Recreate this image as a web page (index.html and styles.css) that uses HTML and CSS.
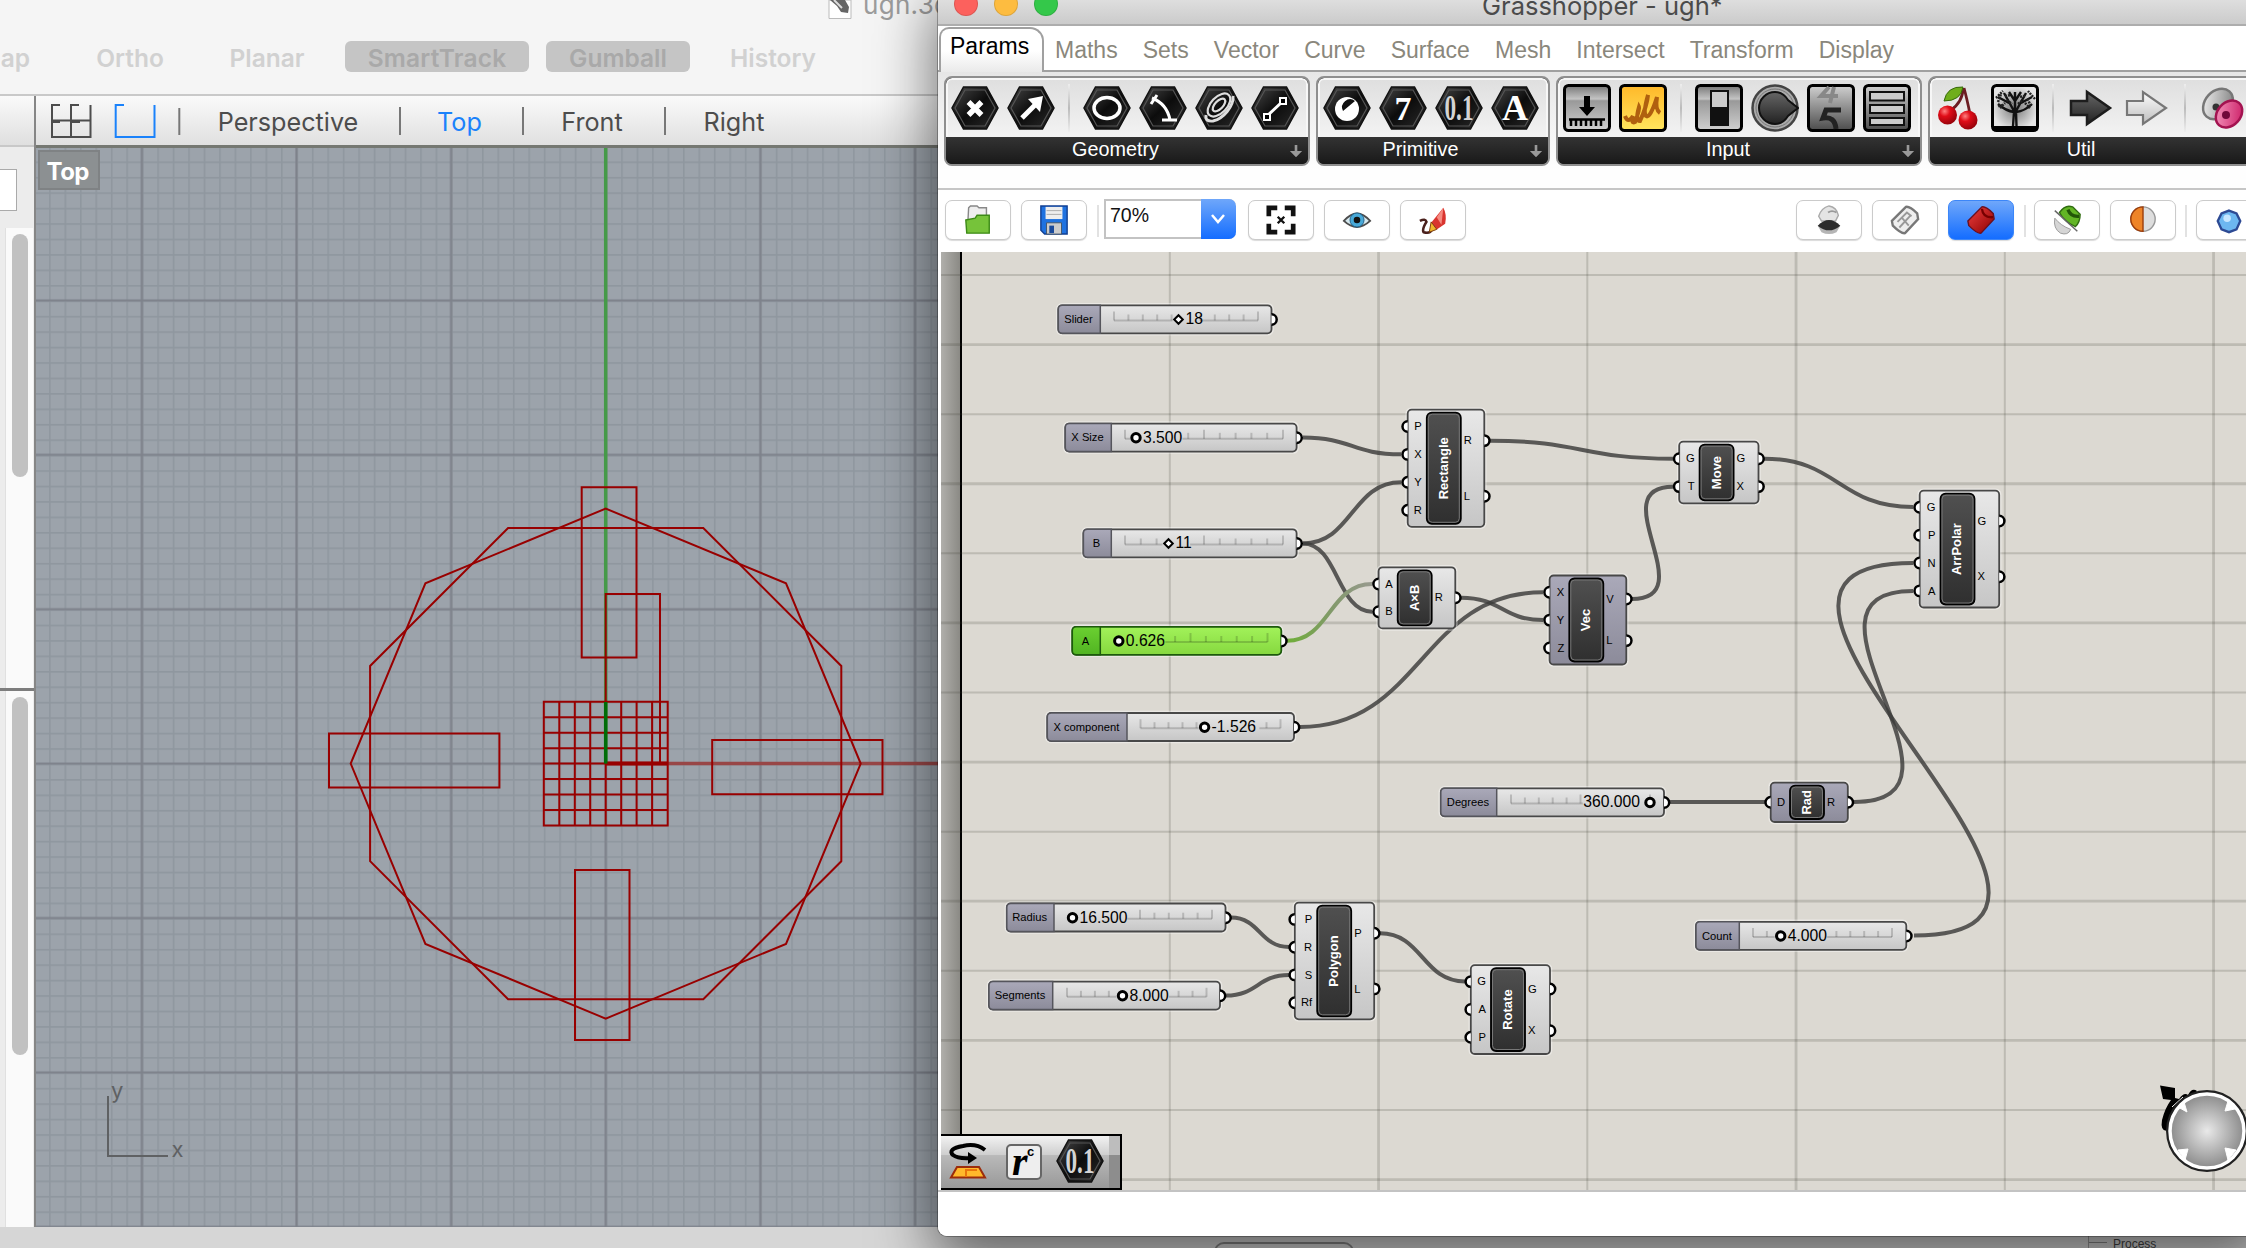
FILE: index.html
```html
<!DOCTYPE html>
<html lang="en">
<head>
<meta charset="utf-8">
<title>Grasshopper - ugh*</title>
<link rel="stylesheet" href="styles.css">
</head>
<body>
<svg class="defs" width="0" height="0">
  <defs>
    <linearGradient id="hexg" x1="0" y1="0" x2="1" y2="1"><stop offset="0" stop-color="#4a4a4a"/><stop offset=".5" stop-color="#0c0c0c"/><stop offset="1" stop-color="#2b2b2b"/></linearGradient>
    <linearGradient id="metal" x1="0" y1="0" x2="0" y2="1"><stop offset="0" stop-color="#777"/><stop offset=".3" stop-color="#c4c4c4"/><stop offset=".34" stop-color="#999"/><stop offset="1" stop-color="#d0d0d0"/></linearGradient>
    <linearGradient id="metal2" x1="0" y1="0" x2="0" y2="1"><stop offset="0" stop-color="#d0d0d0"/><stop offset="1" stop-color="#4c4c4c"/></linearGradient>
    <linearGradient id="gold" x1="0" y1="0" x2="0" y2="1"><stop offset="0" stop-color="#ffb829"/><stop offset="1" stop-color="#ffe65e"/></linearGradient>
    <radialGradient id="cherry" cx=".35" cy=".3" r=".8"><stop offset="0" stop-color="#ff8080"/><stop offset=".35" stop-color="#e00d18"/><stop offset="1" stop-color="#8a0008"/></radialGradient>
    <radialGradient id="treeg"><stop offset="0" stop-color="#777"/><stop offset="1" stop-color="#e4e4e4"/></radialGradient>
    <linearGradient id="dark" x1="0" y1="0" x2="0" y2="1"><stop offset="0" stop-color="#666"/><stop offset="1" stop-color="#222"/></linearGradient>
    <linearGradient id="light" x1="0" y1="0" x2="0" y2="1"><stop offset="0" stop-color="#fdfdfd"/><stop offset="1" stop-color="#bdbdbd"/></linearGradient>
    <linearGradient id="grayg" x1="0" y1="0" x2="1" y2="1"><stop offset="0" stop-color="#fafafa"/><stop offset="1" stop-color="#777"/></linearGradient>
    <linearGradient id="pinkg" x1="0" y1="0" x2="1" y2="1"><stop offset="0" stop-color="#f7a0c4"/><stop offset="1" stop-color="#c9145f"/></linearGradient>
    <linearGradient id="redg" x1="0" y1="0" x2="1" y2="1"><stop offset="0" stop-color="#f04040"/><stop offset="1" stop-color="#8a0000"/></linearGradient>
    <symbol id="hex" viewBox="0 0 48 48"><path d="M12.500 3H35.500L47 24 35.500 45H12.500L1 24Z" fill="url(#hexg)" stroke="#111" stroke-width="1.500"/><path d="M14 6H34L44 24 34 42H14L4 24Z" fill="none" stroke="#555" stroke-width="1.200"/></symbol>
  </defs>
</svg>

<div class="rhino">
  <header class="topbar">
    <div class="doc">
      <svg width="24" height="20" viewBox="0 0 24 20"><path d="M1 0H23V18.500H1Z" fill="#fff" stroke="#bbb"/><path d="M2 0L9 6 13 12 20 13 21 7 17 0Z" fill="#666"/><path d="M6 0l8 8" stroke="#ddd" stroke-width="2"/></svg>
      <span>ugh.3dm</span>
    </div>
    <nav class="modes">
      <span class="m m1">ap</span><span class="m m2">Ortho</span><span class="m m3">Planar</span><span class="m m4 on">SmartTrack</span><span class="m m5 on">Gumball</span><span class="m m6">History</span>
    </nav>
  </header>
  <div class="work">
    <aside class="side">
      <div class="side-head"></div>
      <div class="side-a"><div class="field"></div><div class="track t1"><i></i></div></div>
      <div class="side-b"><div class="track t2"><i></i></div></div>
    </aside>
    <main class="view">
      <nav class="viewtabs">
        <svg width="130" height="40" viewBox="51 102 130 40" fill="none" stroke-width="2">
          <path d="M60 106H52V138H90.500V106M79 106H71V138M52 121.500H90.500M52 123H60M71 123H80" stroke="#4d4d4d"/>
          <path d="M124 106H115.700V138H154.500V106" stroke="#1a82fb"/><path d="M179.300 109V136" stroke="#777"/>
        </svg>
        <span class="vt v1">Perspective</span><i></i><span class="vt v2 sel">Top</span><i></i><span class="vt v3">Front</span><i></i><span class="vt v4">Right</span>
      </nav>
      <svg class="viewport" viewBox="36 148 902 1079" width="902" height="1079">
        <defs>
          <pattern id="minor" x="605.700" y="763.600" width="15.462" height="15.440" patternUnits="userSpaceOnUse"><path d="M0 0H15.500M0 0V15.500" stroke="#8f979f" stroke-width="3.200"/></pattern>
          <pattern id="major" x="528.400" y="686.400" width="154.620" height="154.400" patternUnits="userSpaceOnUse"><path d="M0 77.200H154.700M77.300 0V154.500" stroke="#7e828b" stroke-width="2.200"/></pattern>
        </defs>
        <rect x="36" y="148" width="902" height="1079" fill="#9ca3ab"/>
        <rect x="36" y="148" width="902" height="1079" fill="url(#minor)"/>
        <rect x="36" y="148" width="902" height="1079" fill="url(#major)"/>
        <path d="M605.700 148V764" stroke="#459a48" stroke-width="3.500"/>
        <path d="M605.700 763.600H938" stroke="#984646" stroke-width="3.500"/>
        <g fill="none" stroke="#980000" stroke-width="2">
          <path d="M860.700 763.600L786 943.900 605.700 1018.600 425.400 943.900 350.700 763.600 425.400 583.300 605.700 508.600 786 583.300Z"/>
          <path d="M841.300 861.200L703.300 999.200H508.100L370.100 861.200V666L508.100 528H703.300L841.300 666Z"/>
          <path d="M581.700 487.300H636.500V657.500H581.700ZM605.700 594H660V763.600H605.700ZM329 733.400H499.400V787.400H329ZM712.200 740H882.500V794.300H712.200ZM575 870H629.500V1040H575Z"/>
          <path d="M543.800 701.800H667.700V825.600H543.800ZM559.300 701.800V825.600M574.800 701.800V825.600M590.200 701.800V825.600M605.700 701.800V825.600M621.200 701.800V825.600M636.600 701.800V825.600M652.100 701.800V825.600M543.800 717.200H667.700M543.800 732.700H667.700M543.800 748.200H667.700M543.800 763.600H667.700M543.800 779H667.700M543.800 794.500H667.700M543.800 810H667.700"/>
          <path d="M605.700 763.600H667.700" stroke-width="4"/><path d="M605.700 763.600V702" stroke="#006d08" stroke-width="3.500"/>
        </g>
        <path d="M108 1096V1156H168" fill="none" stroke="#5f6163" stroke-width="2"/>
        <text class="ax" x="111" y="1098">y</text><text class="ax" x="171.500" y="1157">x</text>
        <g><rect x="39" y="151" width="60" height="38" fill="#8c9092" stroke="#7f8284" stroke-width="2"/><text class="vlabel" x="46.500" y="180" textLength="43">Top</text></g>
      </svg>
    </main>
  </div>
  <footer class="dock"><div class="pill"></div><div class="proc"><i></i><span>Process</span></div></footer>
</div>

<section class="gh">
  <header class="title"><i class="r"></i><i class="y"></i><i class="g"></i><h1>Grasshopper - ugh*</h1></header>
  <nav class="tabs"><b>Params</b><span>Maths</span><span>Sets</span><span>Vector</span><span>Curve</span><span>Surface</span><span>Mesh</span><span>Intersect</span><span>Transform</span><span>Display</span></nav>
  <div class="ribbon">
    <div class="grp g1"><div class="icons">
      <svg viewBox="0 0 48 48"><use href="#hex"/><path d="M17.500 18L30.500 31M30.500 18L17.500 31" stroke="#fff" stroke-width="5.500"/></svg>
      <svg viewBox="0 0 48 48"><use href="#hex"/><path d="M15 34L28 21" stroke="#fff" stroke-width="5"/><path d="M21 15L36 12 33 28Z" fill="#fff"/></svg>
      <i></i>
      <svg viewBox="0 0 48 48"><use href="#hex"/><ellipse cx="24" cy="24" rx="13" ry="10.500" fill="none" stroke="#fff" stroke-width="3.500"/></svg>
      <svg viewBox="0 0 48 48"><use href="#hex"/><path d="M13 14Q28 20 31 36M23 36H38M12 20L18 11" fill="none" stroke="#fff" stroke-width="3"/></svg>
      <svg viewBox="0 0 48 48"><use href="#hex"/><g fill="none" stroke="#ddd" stroke-width="2.200"><ellipse cx="24" cy="21" rx="14" ry="8" transform="rotate(-46 24 21)"/><ellipse cx="24" cy="21" rx="8" ry="4" transform="rotate(-46 24 21)"/><path d="M11 31Q10 38 18 37C28 35 39 22 38 12" stroke-width="3"/></g></svg>
      <svg viewBox="0 0 48 48"><use href="#hex"/><path d="M16 32L32 17" stroke="#fff" stroke-width="3"/><path d="M13 30H19V36H13ZM29 14H35V20H29Z" fill="#000" stroke="#fff" stroke-width="2"/></svg>
    </div><div class="cap"><span>Geometry</span><svg viewBox="0 0 16 16"><path d="M6.500 1H9.500V8H15L8 15 1 8H6.500Z" fill="#999"/></svg></div></div>
    <div class="grp g2"><div class="icons">
      <svg viewBox="0 0 48 48"><use href="#hex"/><circle cx="24" cy="25" r="12" fill="#fff"/><path d="M20 27A8 8 0 0 1 32 17Z" fill="#111"/></svg>
      <svg viewBox="0 0 48 48"><use href="#hex"/><text class="hx" x="24" y="36">7</text></svg>
      <svg viewBox="0 0 48 48"><use href="#hex"/><text class="hx sm" x="24" y="36" textLength="29" lengthAdjust="spacingAndGlyphs">0.1</text></svg>
      <svg viewBox="0 0 48 48"><use href="#hex"/><text class="hx big" x="24" y="36">A</text></svg>
    </div><div class="cap"><span>Primitive</span><svg viewBox="0 0 16 16"><path d="M6.500 1H9.500V8H15L8 15 1 8H6.500Z" fill="#999"/></svg></div></div>
    <div class="grp g3"><div class="icons">
      <svg viewBox="0 0 48 48"><rect x="1.500" y="1.500" width="45" height="45" rx="4" fill="url(#metal)" stroke="#000" stroke-width="3"/><path d="M21 12H27V23H32L24 32 16 23H21Z"/><path d="M6 35.500H42M8 35V42M13 35V42M18 35V42M23 35V42M28 35V42M33 35V42M38 35V42" stroke="#000" stroke-width="2.500"/></svg>
      <svg viewBox="0 0 48 48"><rect x="1.500" y="1.500" width="45" height="45" rx="4" fill="url(#gold)" stroke="#000" stroke-width="3"/><path d="M6 32Q9 40 14 32Q12 40 16 38Q21 25 20 23Q16 37 21 37Q28 22 29 11Q24 28 27 32Q31 35 38 13Q36 26 41 29" fill="none" stroke="#b0600f" stroke-width="4"/></svg>
      <i></i>
      <svg viewBox="0 0 48 48"><rect x="1.500" y="1.500" width="45" height="45" rx="4" fill="url(#metal)" stroke="#000" stroke-width="3"/><rect x="15" y="6" width="19" height="36" fill="#111"/><rect x="17" y="8" width="15" height="15" fill="#ccc"/></svg>
      <svg viewBox="0 0 48 48"><circle cx="24" cy="24" r="22.500" fill="#aaa" stroke="#444" stroke-width="2.500"/><circle cx="24" cy="24" r="19" fill="none" stroke="#777"/><path d="M24 8A16 16 0 1 0 24 40Q32 40 37 32L47 24 37 16Q32 8 24 8Z" fill="url(#dark)" stroke="#111" stroke-width="2"/></svg>
      <svg viewBox="0 0 48 48"><rect x="1.500" y="1.500" width="45" height="45" rx="4" fill="url(#metal2)" stroke="#000" stroke-width="3"/><path d="M22 3L14 12H31M27 3L23 19" fill="none" stroke="#888" stroke-width="4"/><path d="M34 26H19L16 34Q28 32 29 45" fill="none" stroke="#222" stroke-width="5"/></svg>
      <svg viewBox="0 0 48 48"><rect x="1.500" y="1.500" width="45" height="45" rx="4" fill="url(#metal2)" stroke="#000" stroke-width="3"/><path d="M7 8H41V16.500H7ZM7 21H41V29H7ZM7 34H41V41H7Z" fill="#ccc" stroke="#111" stroke-width="2"/></svg>
    </div><div class="cap"><span>Input</span><svg viewBox="0 0 16 16"><path d="M6.500 1H9.500V8H15L8 15 1 8H6.500Z" fill="#999"/></svg></div></div>
    <div class="grp g4"><div class="icons">
      <svg viewBox="0 0 48 48"><path d="M28 4Q28 18 15 27M29 4Q32 15 35 30" fill="none" stroke="#6b1c22" stroke-width="2.800"/><path d="M9 17Q12 2 28 3Q26 17 9 17Z" fill="#6fae1b" stroke="#37690b"/><circle cx="12.500" cy="31" r="9.500" fill="url(#cherry)"/><circle cx="33" cy="36" r="9.500" fill="url(#cherry)"/></svg>
      <svg viewBox="0 0 48 48"><rect x="1.500" y="1.500" width="45" height="45" rx="4" fill="url(#treeg)" stroke="#000" stroke-width="3"/><path d="M1 42H47V45Q47 47 44 47H4Q1 47 1 45Z"/><path d="M22 42L23 28Q15 27 7 20M25.500 42L25 28Q34 27 41 20M24 30V8M23 27L13 9M25 27L35 9M18 19L7 13M30 19L41 13M24 17L18 8M24 17L30 8" fill="none" stroke="#111" stroke-width="2.400"/><path d="M7 18L10 10M12 21L7 22M40 22L36 14M14 12L20 11M34 12L28 13M5 14L12 7M44 15L37 7M16 16L21 20M27 20L32 16M9 24L14 19M34 19L39 24" fill="none" stroke="#222" stroke-width="2.500" stroke-dasharray="2 1"/></svg>
      <i></i>
      <svg viewBox="0 0 48 48"><path d="M4 17H20V8L43 24 20 40V31H4Z" fill="url(#dark)" stroke="#1d1d1d" stroke-width="2.500"/></svg>
      <svg viewBox="0 0 48 48"><path d="M4 17H20V8L43 24 20 40V31H4Z" fill="url(#light)" stroke="#777" stroke-width="2.200"/></svg>
      <i></i>
      <svg viewBox="0 0 48 48"><ellipse cx="19" cy="20" rx="17" ry="13" transform="rotate(-48 19 20)" fill="url(#grayg)" stroke="#777" stroke-width="2.500"/><circle cx="17" cy="23" r="3.500" fill="#333"/><ellipse cx="30" cy="30" rx="15" ry="11.500" transform="rotate(-48 30 30)" fill="url(#pinkg)" stroke="#a31350" stroke-width="2.500"/><circle cx="27" cy="31" r="4" fill="#70083a"/></svg>
    </div><div class="cap"><span>Util</span><svg viewBox="0 0 16 16"><path d="M6.500 1H9.500V8H15L8 15 1 8H6.500Z" fill="#999"/></svg></div></div>
  </div>
  <div class="tools">
    <button class="bt"><svg viewBox="0 0 32 32"><path d="M6 3L8 1H15L17 3H25V22H5Z" fill="#eee" stroke="#888" stroke-width="1.500"/><path d="M3 16L13 14 15 11H28V30H4Z" fill="#76c33a" stroke="#3d8a17" stroke-width="1.500"/></svg></button>
    <button class="bt"><svg viewBox="0 0 32 32"><path d="M2 1H30V31H6L2 27Z" fill="#1f72e0" stroke="#123f91" stroke-width="1.500"/><path d="M7 2H25V15H7Z" fill="#eee"/><path d="M8 6H24M8 10H24" stroke="#aaa"/><path d="M8 19H24V31H8Z" fill="#ccc" stroke="#456"/><path d="M11 22H16V30H11Z" fill="#1b4b9b"/></svg></button>
    <i class="sep"></i>
    <div class="combo"><span>70%</span><b><svg width="20" height="14" viewBox="0 0 20 14"><path d="M4 3L10 10 16 3" fill="none" stroke="#fff" stroke-width="2.500"/></svg></b></div>
    <button class="bt"><svg viewBox="0 0 32 32"><path d="M3 12V3H12M20 3H29V12M29 20V29H20M12 29H3V20" fill="none" stroke="#111" stroke-width="5"/><path d="M12.500 12.500L19.500 19.500M19.500 12.500L12.500 19.500" stroke="#111" stroke-width="2.500"/></svg></button>
    <button class="bt"><svg viewBox="0 0 32 32"><path d="M2 17Q16 1 30 17Q16 30 2 17Z" fill="#d5e8ee" stroke="#4d4d4d" stroke-width="2"/><circle cx="16" cy="16" r="7.500" fill="#48a9d8" stroke="#1f5d84"/><circle cx="16" cy="16" r="3.500" fill="#111"/></svg></button>
    <button class="bt"><svg viewBox="0 0 32 32"><path d="M2 17Q8 14 9 18Q4 26 6 29Q13 31 15 26" fill="none" stroke="#4a201c" stroke-width="2.800"/><path d="M14 19L27 3Q31 10 29 20L20 26Z" fill="#d9352f"/><path d="M20 13L27 3L25 21Z" fill="#f58a80"/><path d="M14 18L20 26 12 29Z" fill="#f0b62c" stroke="#7c3b0c"/></svg></button>
    <span class="grow"></span>
    <button class="bt"><svg viewBox="0 0 32 32"><path d="M5 12Q8 3 16 1Q24 2 26 11L23 17H8Z" fill="#e4e4e4" stroke="#aaa" stroke-width="1.500"/><path d="M15 8Q19 5 24 8" fill="none" stroke="#999" stroke-width="2"/><path d="M4 22Q16 10 28 22L24 29Q16 33 8 29Z" fill="#b5b5b5"/><path d="M4 22Q16 10 28 22Q16 32 4 22Z" fill="#2b2b2b"/></svg></button>
    <button class="bt"><svg viewBox="0 0 32 32"><path d="M2 17L17 2Q21 1 29 9L30 15 16 30Q12 31 3 22Z" fill="#eee" stroke="#777" stroke-width="2.500"/><path d="M8 18L18 8L23 12M10 24L22 11M13 14L20 22" fill="none" stroke="#999" stroke-width="2"/></svg></button>
    <button class="bt act"><svg viewBox="0 0 32 32"><path d="M2 17L17 2Q21 1 29 9L30 15 16 30Q12 31 3 22Z" fill="url(#redg)" stroke="#6a1020" stroke-width="1.500"/><path d="M17 4Q18 14 29 13" fill="none" stroke="#700" stroke-width="2.500"/></svg></button>
    <i class="sep"></i>
    <button class="bt"><svg viewBox="0 0 32 32"><path d="M3 14Q9 22 20 26Q17 33 9 30Q1 25 3 14Z" fill="#d5d5d5" stroke="#999"/><path d="M8 8Q14 -1 22 2L30 10Q30 18 25 23Q13 18 8 8Z" fill="#62b525" stroke="#2f6c10" stroke-width="1.500"/><path d="M17 5Q20 13 29 12" fill="none" stroke="#225608" stroke-width="3.500"/><path d="M3 6L27 28" stroke="#666" stroke-width="1.500"/></svg></button>
    <button class="bt"><svg viewBox="0 0 32 32"><circle cx="16" cy="15" r="13" fill="#ddd" stroke="#999" stroke-width="1.500"/><path d="M16 2A13 13 0 0 0 16 28Z" fill="#ee8428" stroke="#9c3d0b" stroke-width="1.500"/></svg></button>
    <i class="sep"></i>
    <button class="bt"><svg viewBox="0 0 32 32"><path d="M16 6L24 9 28 17 24 26 16 29 8 26 4 17 8 9Z" fill="#6db7f0" stroke="#2d4a94" stroke-width="2.500"/><circle cx="14" cy="14" r="4" fill="#c6e6ff"/></svg></button>
  </div>
  <svg class="canvas" id="canvas" viewBox="941 252 1305 938" width="1305" height="938">
    <defs>
      <linearGradient id="edge"><stop offset="0" stop-color="#b0afab"/><stop offset="1" stop-color="#8b8a85"/></linearGradient>
      <linearGradient id="body" x1="0" y1="0" x2="0" y2="1"><stop offset="0" stop-color="#e8e8e8"/><stop offset="1" stop-color="#c6c6c6"/></linearGradient>
      <linearGradient id="slate" x1="0" y1="0" x2="0" y2="1"><stop offset="0" stop-color="#aaa9b9"/><stop offset="1" stop-color="#8c8b9a"/></linearGradient>
      <linearGradient id="lime" x1="0" y1="0" x2="0" y2="1"><stop offset="0" stop-color="#a2f25a"/><stop offset="1" stop-color="#86d83f"/></linearGradient>
      <linearGradient id="green" x1="0" y1="0" x2="0" y2="1"><stop offset="0" stop-color="#6bd031"/><stop offset="1" stop-color="#51b422"/></linearGradient>
      <linearGradient id="capsule" x1="0" y1="0" x2="0" y2="1"><stop offset="0" stop-color="#505050"/><stop offset="1" stop-color="#2f2f2f"/></linearGradient>
      <linearGradient id="wireg" gradientUnits="userSpaceOnUse" x1="1290" y1="0" x2="1375" y2="0"><stop offset="0" stop-color="#70ad3b"/><stop offset=".5" stop-color="#82996b"/><stop offset="1" stop-color="#9a9a92"/></linearGradient>
      <radialGradient id="dial"><stop offset="0" stop-color="#e9e9e9"/><stop offset="1" stop-color="#858585"/></radialGradient>
      <linearGradient id="barg" x1="0" y1="0" x2="0" y2="1"><stop offset="0" stop-color="#f4f4f4"/><stop offset=".37" stop-color="#cecece"/><stop offset=".38" stop-color="#b9b9b9"/><stop offset="1" stop-color="#989898"/></linearGradient>
    </defs>
    <rect x="941" y="252" width="1305" height="938" fill="#dcd9d2"/>
    <rect x="941" y="252" width="19" height="938" fill="url(#edge)"/>
    <path d="M961 252V1190" stroke="#000" stroke-width="2"/>
    <g id="grid" stroke="rgba(60,60,50,.19)" stroke-width="2"></g>
    <g id="wires"></g>
    <g id="nodes"></g>
    <path d="M2160 1085.500L2175 1088V1098L2179 1099Q2184 1092 2188 1095Q2192 1087 2197 1091L2168 1131Q2160 1132 2162 1120Q2165 1108 2171 1100L2163 1099Z" fill="#000"/>
    <path d="M2172 1107L2183 1097" stroke="#fff"/>
    <circle cx="2207" cy="1131" r="39.500" fill="url(#dial)" stroke="#222" stroke-width="3"/>
    <circle cx="2207" cy="1131" r="37" fill="none" stroke="#fff" stroke-width="3.500"/>
    <path d="M2178 1107L2187 1112 2184 1102ZM2225 1111L2235 1109 2228 1101ZM2178 1150L2188 1149 2185 1160ZM2225 1148L2236 1150 2228 1160Z" fill="#fff" stroke="#fff"/>
    <g>
      <rect x="941" y="1135" width="180" height="54" fill="url(#barg)"/>
      <rect x="1109" y="1135" width="12" height="20" fill="#bdbdbd"/><rect x="1109" y="1155" width="12" height="34" fill="#8d8d8d"/>
      <path d="M941 1135H1121V1189H941" fill="none" stroke="#000" stroke-width="2"/>
      <path d="M985 1150Q976 1143 963 1146Q947 1149 953 1155Q958 1159 971 1158" fill="none" stroke="#000" stroke-width="4"/><path d="M968 1152L977 1158 968 1164Z"/>
      <path d="M957 1167H979L985 1177.500H951Z" fill="#ffb92b" stroke="#9c2c0b" stroke-width="2"/><path d="M966 1177V1170H977" fill="none" stroke="#e8760c" stroke-width="2"/>
      <rect x="1007" y="1145" width="34" height="34" rx="4" fill="#eee" stroke="#666" stroke-width="2"/><text class="rr" x="1012" y="1175">r</text><text class="rc" x="1027" y="1156">c</text>
      <use href="#hex" x="1056" y="1137" width="48" height="48"/><text class="hx sm" x="1080" y="1173" textLength="29" lengthAdjust="spacingAndGlyphs">0.1</text>
    </g>
  </svg>
  <div class="foot"></div>
</section>
<script src="nodes.js"></script>
</body>
</html>
```
FILE: nodes.js
```js
const NS = 'http://www.w3.org/2000/svg';
const layer = id => document.getElementById(id);

function add(parent, tag, attrs, text) {
  const el = document.createElementNS(NS, tag);
  for (const k in attrs) el.setAttribute(k, attrs[k]);
  if (text !== undefined) el.textContent = text;
  parent.appendChild(el);
  return el;
}

// grid
for (let i = 0; i < 6; i++) add(layer('grid'), 'path', { d: `M${1169.8 + i * 208.75} 252V1190`, 'stroke-width': i % 2 ? 2.8 : 2 });
for (let i = 0; i < 14; i++) add(layer('grid'), 'path', { d: `M941 ${275 + i * 69.58}H2246`, 'stroke-width': i % 2 ? 2.8 : 2 });

// wires: x1, y1, x2, y2, handle length (defaults to half of the span)
const wires = [
  [1303, 437.6, 1401, 454.3], [1303, 543.4, 1401, 482.3], [1303, 543.4, 1372, 611.7],
  [1287, 640.8, 1372, 584, null, 'url(#wireg)'], [1300, 727, 1543, 592.3],
  [1461, 597.7, 1543, 620], [1490, 440.7, 1673, 458.7], [1632, 599, 1673, 486.7, 72],
  [1764, 458.7, 1913, 507], [1854, 802, 1913, 591, 139], [1914, 935.5, 1913, 563, 259],
  [1670, 802, 1765, 802], [1231, 917.6, 1289, 947], [1226, 995.6, 1289, 975],
  [1380, 933.3, 1465, 981.5]
];
for (const [x1, y1, x2, y2, h, color] of wires) {
  const c = h || (x2 - x1) / 2;
  add(layer('wires'), 'path', {
    d: `M${x1} ${y1}C${x1 + c} ${y1} ${x2 - c} ${y2} ${x2} ${y2}`,
    class: 'wire', style: color ? `stroke:${color};opacity:1` : ''
  });
}

function port(g, x, y, side) {
  const s = side === 'in' ? 0 : 1;
  add(g, 'path', { class: 'port', d: `M${x} ${y - 5.2}A5.2 5.2 0 0 ${s} ${x} ${y + 5.2}` });
}

function slider(label, x, x2, y, div, r1, r2, knob, value, shape, opt = {}) {
  const g = add(layer('nodes'), 'g', { class: opt.live ? 'slider live' : 'slider' });
  const h = 28, cy = y + 14.2;
  add(g, 'rect', { class: 'halo', x: x - 1.5, y: y - 1.5, width: x2 - x + 3, height: h + 3, rx: 5 });
  add(g, 'rect', { class: 'body', x, y, width: x2 - x, height: h, rx: 4 });
  add(g, 'path', { class: 'name', d: `M${div} ${y}H${x + 4}Q${x} ${y} ${x} ${y + 4}V${y + h - 4}Q${x} ${y + h} ${x + 4} ${y + h}H${div}Z` });
  add(g, 'text', { class: 'label', x: (x + div) / 2 - 0.8, y: cy + 3.6 }, label);
  const w = value.length * 8.3 + 1;
  const t1 = opt.left ? knob - 8 - w : knob - 6, t2 = opt.left ? knob - 6 : knob + w + 4;
  add(g, 'path', { class: 'rail', d: `M${r1} ${cy + 1}H${Math.max(r1, t1)}M${Math.min(r2, t2)} ${cy + 1}H${r2}` });
  for (let i = 0; i <= 10; i++) {
    const tx = r1 + (r2 - r1) * i / 10;
    if (tx > t1 && tx < t2) continue;
    add(g, 'path', { class: 'rail', d: `M${tx} ${cy + 1}V${cy - (i % 5 ? 5 : 8)}` });
  }
  if (shape === 'd') add(g, 'path', { class: 'knob thin', d: `M${knob - 4.3} ${cy}L${knob} ${cy - 4.3} ${knob + 4.3} ${cy} ${knob} ${cy + 4.3}Z` });
  else add(g, 'circle', { class: 'knob', cx: knob, cy, r: 4.2 });
  add(g, 'text', { class: 'value', x: opt.left ? knob - 10 : knob + 7, y: cy + 4.9, 'text-anchor': opt.left ? 'end' : 'start' }, value);
  port(g, x2, cy, 'out');
}

slider('Slider', 1058.3, 1271.5, 305.3, 1100.3, 1114, 1258, 1178.5, '18', 'd');
slider('X Size', 1065.3, 1296.6, 423.6, 1111.3, 1125, 1283, 1136, '3.500', 'c');
slider('B', 1083.4, 1296.6, 529.3, 1111.3, 1125, 1283, 1168.5, '11', 'd');
slider('A', 1072.3, 1281.3, 626.8, 1100.3, 1113.5, 1267.5, 1118.8, '0.626', 'c', { live: true });
slider('X component', 1047.3, 1294, 713, 1127, 1140.5, 1280.5, 1204.6, '-1.526', 'c');
slider('Degrees', 1440.8, 1664, 788.3, 1496.7, 1511, 1650, 1650, '360.000', 'c', { left: true });
slider('Radius', 1006.8, 1225.5, 903.5, 1054, 1068, 1212, 1072.5, '16.500', 'c');
slider('Segments', 989, 1220, 981.6, 1052.7, 1067, 1206.5, 1122.5, '8.000', 'c');
slider('Count', 1696, 1906.3, 921.8, 1739.3, 1753, 1892, 1780.7, '4.000', 'c');

function component(name, x, x2, y, y2, c1, ins, outs, slate) {
  const g = add(layer('nodes'), 'g', { class: slate ? 'comp slate' : 'comp' });
  add(g, 'rect', { class: 'halo', x: x - 1.5, y: y - 1.5, width: x2 - x + 3, height: y2 - y + 3, rx: 5 });
  add(g, 'rect', { class: 'body', x, y, width: x2 - x, height: y2 - y, rx: 4 });
  add(g, 'rect', { class: 'capsule', x: c1, y: y + 3, width: 34, height: y2 - y - 6, rx: 5 });
  add(g, 'rect', { class: 'shine', x: c1 + 1.5, y: y + 4.5, width: 31, height: y2 - y - 9, rx: 4 });
  const cx = c1 + 17, cy = (y + y2) / 2;
  add(g, 'text', { class: 'cname', x: cx, y: cy + 4, transform: `rotate(-90 ${cx} ${cy})` }, name);
  for (const [t, py] of ins) {
    port(g, x, py, 'in');
    add(g, 'text', { class: 'label end', x: c1 - 5, y: py + 3.6 }, t);
  }
  for (const [t, py] of outs) {
    port(g, x2, py, 'out');
    add(g, 'text', { class: 'label start', x: c1 + 37, y: py + 3.6 }, t);
  }
}

component('Rectangle', 1407.7, 1484.3, 409.7, 526.8, 1426.8, [['P', 426.5], ['X', 454.4], ['Y', 482.3], ['R', 510.2]], [['R', 440.6], ['L', 496.3]]);
component('A×B', 1378.6, 1455.3, 567.3, 628.4, 1397.7, [['A', 584], ['B', 611.8]], [['R', 597.7]]);
component('Vec', 1549.6, 1626.3, 575.5, 664.5, 1569.3, [['X', 592.3], ['Y', 620.1], ['Z', 648]], [['V', 599], ['L', 640.6]], true);
component('Move', 1679.2, 1758.5, 441.7, 503.3, 1699.6, [['G', 458.7], ['T', 486.6]], [['G', 458.7], ['X', 486.6]]);
component('ArrPolar', 1919.7, 1999.2, 490.7, 607.5, 1940.5, [['G', 507.3], ['P', 535.2], ['N', 563], ['A', 590.9]], [['G', 521], ['X', 576.8]]);
component('Rad', 1770.7, 1847.8, 782.6, 822, 1790, [['D', 802.3]], [['R', 802.3]], true);
component('Polygon', 1294.8, 1374.2, 902.7, 1019.3, 1317.2, [['P', 919.4], ['R', 947.3], ['S', 974.9], ['Rf', 1002.7]], [['P', 933.3], ['L', 988.9]]);
component('Rotate', 1470.8, 1550, 965.2, 1054, 1491, [['G', 981.6], ['A', 1009.5], ['P', 1037.3]], [['G', 989], ['X', 1030.8]]);
```
FILE: styles.css
```css
* { box-sizing: border-box; }
body { margin: 0; width: 2246px; height: 1248px; overflow: hidden; position: relative; font-family: Inter, "Liberation Sans", sans-serif; background: #d8d8d8; }
.defs { position: absolute; }

/* modelling window */
.rhino { width: 2246px; height: 1248px; display: flex; flex-direction: column; }
.topbar { height: 96px; background: #f5f5f5; border-bottom: 2px solid #c9c9c9; display: flex; flex-direction: column; }
.doc { display: flex; height: 41px; padding-left: 828px; gap: 11px; color: #9c9c9c; font-size: 26px; line-height: 30px; overflow: hidden; }
.doc span { margin-top: -10px; letter-spacing: .3px; }
.modes { display: flex; height: 31px; line-height: 34px; font-size: 24.500px; font-weight: 600; color: #d1d1d1; }
.m { display: flex; justify-content: center; white-space: nowrap; }
.m.on { background: #c5c5c5; color: #a9a9a9; border-radius: 6px; }
.m4 { letter-spacing: .2px; }
.m1 { width: 30px; display: flex; justify-content: flex-end; }
.m2 { width: 70px; margin-left: 65px; } .m3 { width: 78px; margin-left: 63px; }
.m4 { width: 184px; margin-left: 39px; } .m5 { width: 144px; margin-left: 17px; } .m6 { width: 90px; margin-left: 38px; }
.work { display: flex; height: 1131px; }
.side { width: 36px; border-right: 2px solid #868686; background: #ececec; display: flex; flex-direction: column; }
.side-head { height: 51px; background: linear-gradient(#fafafa, #dfdfdf); border-bottom: 2px solid #c8c8c8; }
.side-a { height: 544px; border-bottom: 3px solid #7d7d7d; display: flex; flex-direction: column; }
.field { width: 17px; height: 42px; margin: 22px 0 17px; background: #fff; border: 1px solid #aaa; border-left: 0; }
.track { margin-left: 5px; width: 28px; background: #fafafa; flex: 1; border-left: 1px solid #e0e0e0; padding: 6px 0 0 6px; }
.track i { display: block; width: 16px; border-radius: 8px; background: #c1c1c1; }
.t1 i { height: 243px; } .t2 i { height: 358px; }
.side-b { flex: 1; display: flex; flex-direction: column; }
.view { width: 902px; display: flex; flex-direction: column; }
.viewtabs { width: 902px; height: 52px; background: linear-gradient(#fafafa, #e0e0e0); border-bottom: 3px solid #757872; display: flex; align-items: center; padding-left: 15px; font-size: 25.200px; color: #4d4d4d; }
.viewtabs i { width: 2px; height: 28px; background: #777; }
.vt { text-align: center; white-space: nowrap; padding-top: 2px; }
.v1 { width: 218px; padding-right: 4px; } .v2 { width: 121px; color: #1a82fb; padding-right: 4px; } .v3 { width: 140px; padding-right: 4px; } .v4 { width: 138px; padding-right: 2px; }
.viewport { display: block; flex: none; }
.ax { font: 22px Inter, sans-serif; fill: #5f6163; }
.vlabel { font: 700 24px Inter, sans-serif; fill: #fff; }
.dock { height: 21px; background: #d6d6d6; display: flex; padding-left: 1214px; }
.pill { width: 140px; height: 20px; margin-top: 15px; border: 2px solid #888; border-radius: 10px; }
.proc { margin-left: 734px; width: 158px; background: #d2d2d2; border-left: 1px solid #999; display: flex; overflow: hidden; }
.proc i { width: 18px; height: 1px; margin-top: 15px; background: #888; }
.proc span { margin: 11px 0 0 6px; font: 12px/13px "Liberation Sans", sans-serif; color: #444; }

/* floating plugin window */
.gh { position: absolute; left: 938px; top: -16px; width: 1330px; height: 1252px; padding-top: 16px; border-radius: 9px; background: #fff; display: flex; flex-direction: column; box-shadow: 0 0 0 1px rgba(0,0,0,.28), 0 22px 60px 4px rgba(0,0,0,.55); font-family: "Liberation Sans", Arial, sans-serif; }
.title { height: 26px; flex: none; background: linear-gradient(#dedede, #cbcbcb); border-bottom: 2px solid #adadad; display: flex; padding-left: 16px; gap: 16px; }
.title i { width: 24px; height: 24px; margin-top: -8px; border-radius: 50%; border: 1px solid rgba(0,0,0,.12); flex: none; }
.r { background: #fc615d; } .y { background: #fdbc40; } .g { background: #34c84a; }
.title h1 { margin: -10px 0 0 408px; font: 400 25.500px/31px Inter, sans-serif; color: #4b4b4b; white-space: nowrap; }
.tabs { height: 46px; flex: none; display: flex; border-bottom: 2px solid #a0a0a0; font-size: 23px; color: #8a877c; white-space: nowrap; }
.tabs b { width: 105px; height: 46px; margin: 1px 11px 0 1px; font-weight: 400; color: #000; background: linear-gradient(#fff 50%, #e9e9e9); border: 2px solid #a0a0a0; border-bottom: 0; border-radius: 10px 14px 0 0; padding: 4px 0 0 9px; line-height: 26px; }
.tabs span { line-height: 26px; padding-top: 11px; margin-right: 25.100px; }
.ribbon { height: 118px; flex: none; display: flex; padding: 4px 0 0 5.500px; background: linear-gradient(#e6e6e6, #fefefe 85%); border-bottom: 2px solid #c6c6c6; overflow: hidden; }
.grp { height: 90px; border: 2px solid #8f8f8f; border-radius: 8px; background: #1f1f1f; overflow: hidden; margin-right: 6px; flex: none; }
.g1 { width: 366px; } .g2 { width: 234px; } .g3 { width: 366px; } .g4 { width: 368px; }
.icons { height: 59px; background: linear-gradient(#dfdfdf, #f3f3f3); border: 2px solid #f7f7f7; border-bottom: 0; border-radius: 6px 6px 0 0; display: flex; align-items: center; padding-bottom: 2px; }
.icons svg { width: 48px; height: 48px; margin: 0 4.200px 0 3.800px; flex: none; }
.icons i { width: 2px; height: 48px; margin: 0 9px; background: linear-gradient(#eee, #bbb, #eee); flex: none; }
.cap { height: 27px; background: linear-gradient(#333, #191919); color: #fff; font-size: 19.800px; line-height: 25px; display: flex; }
.cap span { flex: 1; text-align: center; }
.cap svg { width: 14px; height: 14px; margin: 7px 5px 0 0; flex: none; }
.g1 .cap span { padding-right: 3px; }
.g2 .cap span { padding-right: 5px; }
.g3 .cap span { padding-right: 2px; }
.g4 .cap span { padding-right: 42px; }
.hx { font: 700 34px "Liberation Serif", serif; fill: #fff; text-anchor: middle; }
.hx.sm { font-size: 35px; fill: #d4d4d4; } .hx.big { font-size: 36px; }
.tools { height: 62px; flex: none; display: flex; align-items: flex-start; padding: 10px 0 0 6.500px; width: 1330px; background: #fff; }
.bt { width: 66px; height: 40px; padding: 0; margin: 0 10px 0 0; border: 1.500px solid #cbcbcb; border-radius: 7px; background: #fff; box-shadow: 0 1px 1px rgba(0,0,0,.15); display: flex; align-items: center; justify-content: center; flex: none; }
.bt svg { width: 30px; height: 30px; margin-top: -1px; }
.bt.act { background: linear-gradient(#6fa7fa, #146dff); border-color: #3c86f8; }
.sep { width: 2px; height: 32px; margin: 5px 8.500px 0 0; background: #e2e2e2; flex: none; }
.combo { width: 132px; height: 40px; margin: -1px 12px 0 -3.500px; border: 2px solid #c3c3c3; border-right: 0; border-radius: 0 7px 7px 0; display: flex; justify-content: space-between; font-size: 19.500px; color: #111; flex: none; }
.combo span { padding: 3px 0 0 4.500px; }
.combo b { width: 35px; margin: -2px 0; background: linear-gradient(#6fa7fa, #146dff); border-radius: 0 7px 7px 0; display: flex; align-items: center; justify-content: center; }
.grow { width: 320px; flex: none; }
.tools .sep ~ .bt.act ~ .bt { margin-right: 9.500px; }
.canvas { display: block; margin-left: 3px; flex: none; }
.foot { height: 46px; flex: none; border-top: 2px solid #c3c3c3; border-radius: 0 0 9px 9px; background: #fff; }

/* node editor */
.wire { fill: none; stroke: #3c3c3a; stroke-width: 4; opacity: .82; }
.halo { fill: none; stroke: rgba(255,255,255,.4); stroke-width: 1.500; }
.body { fill: url(#body); stroke: #484848; stroke-width: 1.800; }
.name { fill: url(#slate); stroke: #55555c; stroke-width: 1.500; }
.slate .body { fill: url(#slate); }
.live .body { fill: url(#lime); stroke: #1d5a0c; }
.live .name { fill: url(#green); stroke: #1d5a0c; }
.label { font: 11.200px "Liberation Sans", sans-serif; text-anchor: middle; fill: #000; }
.label.end { text-anchor: end; } .label.start { text-anchor: start; }
.value { font: 15.700px "Liberation Sans", sans-serif; fill: #000; }
.rail { fill: none; stroke: rgba(0,0,0,.17); stroke-width: 2; }
.knob { fill: #fff; stroke: #000; stroke-width: 3; } .knob.thin { stroke-width: 2; }
.port { fill: #fff; stroke: #000; stroke-width: 2.500; }
.capsule { fill: url(#capsule); stroke: #000; stroke-width: 1.800; }
.shine { fill: none; stroke: #777; stroke-width: 1; }
.cname { font: 700 13px "Liberation Sans", sans-serif; fill: #fff; text-anchor: middle; }
.rr { font: italic 700 40px "Liberation Serif", serif; } .rc { font: 700 13px "Liberation Sans", sans-serif; }
```
